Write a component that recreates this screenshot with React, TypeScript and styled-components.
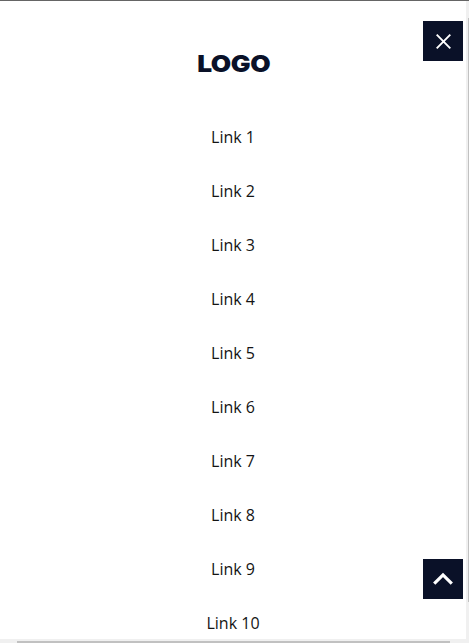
import React from "react";
import styled, { createGlobalStyle } from "styled-components";

const GlobalStyle = createGlobalStyle`
  * { box-sizing: border-box; }
  html, body { margin: 0; height: 643px; overflow: hidden; background: #fff; }
`;

const Viewport = styled.div`
  position: relative;
  display: grid;
  grid-template-columns: 1fr 3px;
  grid-template-rows: 1fr 4px;
  width: 469px;
  height: 643px;
  border-top: 1px solid #656565;
  background: #f0f0f0;
  overflow: hidden;
`;

const Menu = styled.nav`
  display: flex;
  flex-direction: column;
  align-items: center;
  min-height: 0;
  padding-top: 46px;
  background: #fff;
  overflow: hidden;
`;

const Logo = styled.a`
  flex: none;
  height: 34px;
  margin-bottom: 29px;
  padding-left: 1px;
  font: 900 23.5px/34px Inter, sans-serif;
  letter-spacing: -0.4px;
  transform: scaleX(1.12);
  color: #0a1128;
`;

const Links = styled.ul`
  flex: none;
  margin: 0;
  padding: 0;
  list-style: none;
  text-align: center;
`;

const LinkItem = styled.li`
  height: 54px;
  font: 400 16px/54px "Open Sans", sans-serif;
  color: #141414;
`;

const VerticalTrack = styled.div`
  padding: 17px 0 0 2px;
`;

const VerticalThumb = styled.div`
  height: 584px;
  background: #c1c1c1;
`;

const HorizontalTrack = styled.div`
  padding: 2px 16px 0 17px;
`;

const HorizontalThumb = styled.div`
  height: 2px;
  background: #c1c1c1;
`;

const SquareButton = styled.button<{ $top: number }>`
  position: absolute;
  right: 6px;
  top: ${({ $top }) => $top}px;
  display: block;
  width: 40px;
  height: 40px;
  padding: 0;
  border: 0;
  background: #0a1128;

  svg { display: block; }
`;

const links = Array.from({ length: 10 }, (_, i) => `Link ${i + 1}`);

export default function App() {
  return (
    <>
      <GlobalStyle />
      <Viewport>
        <Menu>
          <Logo>LOGO</Logo>
          <Links>
            {links.map((label) => (
              <LinkItem key={label}>{label}</LinkItem>
            ))}
          </Links>
        </Menu>
        <VerticalTrack>
          <VerticalThumb />
        </VerticalTrack>
        <HorizontalTrack>
          <HorizontalThumb />
        </HorizontalTrack>
        <SquareButton $top={20} aria-label="Close menu">
          <svg width="40" height="40" viewBox="0 0 40 40" fill="none" stroke="#fff" strokeWidth="1.9">
            <path d="M13.7 13.7 27.3 27.3M27.3 13.7 13.7 27.3" />
          </svg>
        </SquareButton>
        <SquareButton $top={558} aria-label="Back to top">
          <svg width="40" height="40" viewBox="0 0 40 40" fill="none" stroke="#fff" strokeWidth="3.2">
            <path d="M11.2 24.6 20 15.9 28.8 24.6" />
          </svg>
        </SquareButton>
      </Viewport>
    </>
  );
}
